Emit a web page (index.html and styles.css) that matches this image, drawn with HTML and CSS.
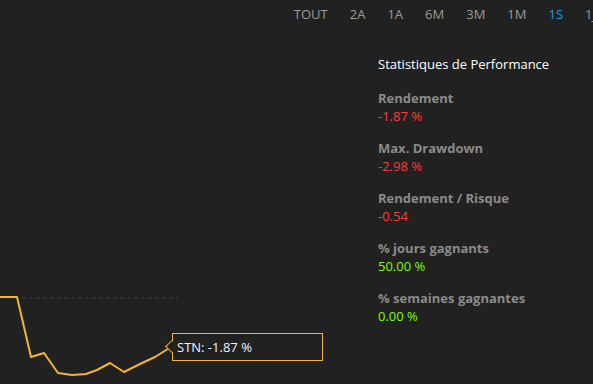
FILE: index.html
```html
<!DOCTYPE html>
<html lang="fr">
<head>
  <meta charset="UTF-8">
  <title>Performance</title>
  <link rel="stylesheet" href="styles.css">
</head>
<body>
  <div class="periodes">
    <span>TOUT</span>
    <span>2A</span>
    <span>1A</span>
    <span>6M</span>
    <span>3M</span>
    <span>1M</span>
    <span class="actif">1S</span>
    <span>1J</span>
  </div>

  <div class="contenu">
    <div class="graphique">
      <svg class="courbe" width="378" height="356" viewBox="0 28 378 356">
        <line x1="22" y1="298" x2="178" y2="298" stroke="#444" stroke-width="1" stroke-dasharray="4 3"/>
        <polyline fill="none" stroke="#f3b431" stroke-width="2" stroke-linejoin="round"
          points="0,297 17,297 31,357 44,353 58,373 72,375 86,374 97,370 110,363 124,372 140,364 155,357 171,347"/>
      </svg>
      <div class="bulle">STN: -1.87 %</div>
    </div>

    <div class="stats">
      <h2>Statistiques de Performance</h2>
      <div class="stat">
        <div class="titre">Rendement</div>
        <div class="valeur neg">-1.87 %</div>
      </div>
      <div class="stat">
        <div class="titre">Max. Drawdown</div>
        <div class="valeur neg">-2.98 %</div>
      </div>
      <div class="stat">
        <div class="titre">Rendement / Risque</div>
        <div class="valeur neg">-0.54</div>
      </div>
      <div class="stat">
        <div class="titre">% jours gagnants</div>
        <div class="valeur pos">50.00 %</div>
      </div>
      <div class="stat">
        <div class="titre">% semaines gagnantes</div>
        <div class="valeur pos">0.00 %</div>
      </div>
    </div>
  </div>
</body>
</html>
```

FILE: styles.css
```css
html, body {
  margin: 0;
  padding: 0;
  background: #212121;
  overflow: hidden;
}
body {
  font-family: "Open Sans", sans-serif;
  font-size: 13px;
  width: 593px;
  height: 384px;
}
.periodes {
  display: flex;
  justify-content: flex-end;
  height: 28px;
  padding-top: 5px;
  box-sizing: border-box;
  margin-right: -14px;
  color: #9a9a9a;
}
.periodes span {
  padding: 0 11px;
  line-height: 18px;
}
.periodes .actif {
  color: #1e9be8;
}
.contenu {
  display: flex;
  height: 356px;
}
.graphique {
  position: relative;
  width: 378px;
  flex-shrink: 0;
}
.courbe {
  display: block;
}
.bulle {
  position: absolute;
  left: 172px;
  top: 305px;
  width: 151px;
  height: 28px;
  box-sizing: border-box;
  border: 1px solid #f3b431;
  background: #212121;
  color: #eef3ff;
  padding: 0 4px;
  line-height: 26px;
}
.bulle::before {
  content: "";
  position: absolute;
  left: -6px;
  top: 8px;
  width: 8px;
  height: 8px;
  border-left: 1px solid #f3b431;
  border-bottom: 1px solid #f3b431;
  background: #212121;
  transform: rotate(45deg);
}
.stats {
  flex: 1;
  padding-top: 26px;
}
.stats h2 {
  margin: 0 0 15px;
  font-size: 13px;
  font-weight: normal;
  color: #ffffff;
  line-height: 20px;
}
.stat {
  margin-bottom: 14px;
}
.titre {
  color: #8a8a8a;
  font-weight: bold;
  line-height: 18px;
}
.valeur {
  line-height: 18px;
}
.neg {
  color: #ff3a3a;
}
.pos {
  color: #7cfc00;
}
```
